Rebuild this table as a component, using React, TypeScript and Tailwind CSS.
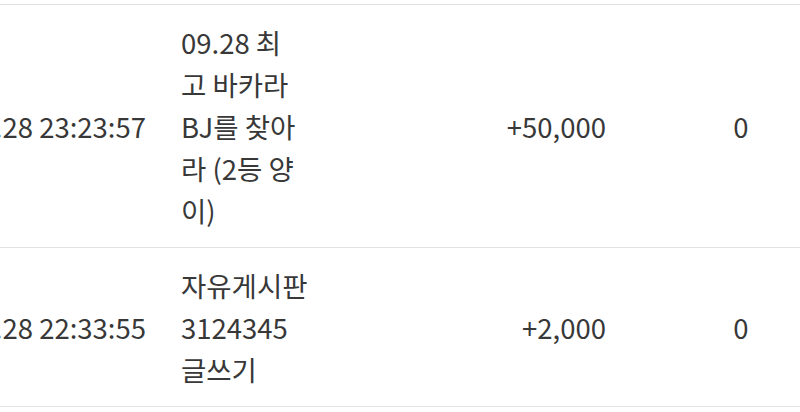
const rows = [
  {
    date: '2023.09.28 23:23:57',
    title: ['09.28 최', '고 바카라', 'BJ를 찾아', '라 (2등 양', '이)'],
    amount: '+50,000',
    balance: '0',
  },
  {
    date: '2023.09.28 22:33:55',
    title: ['자유게시판', '3124345', '글쓰기'],
    amount: '+2,000',
    balance: '0',
  },
];

export default function App() {
  return (
    <div
      className="w-[800px] h-[412px] overflow-hidden bg-white text-[#383838]"
      style={{ fontFamily: '"Noto Sans CJK KR", "Noto Sans", sans-serif' }}
    >
      <div className="h-[4px]" />
      {rows.map((row, i) => (
        <div
          key={i}
          className={`flex border-t border-[#e2e2e2] text-[27.5px] leading-[42px] ${
            i === rows.length - 1 ? 'border-b' : ''
          }`}
        >
          {/* date */}
          <div className="w-[165px] shrink-0 flex items-center justify-end pr-[19px] py-4 overflow-hidden">
            <span className="whitespace-nowrap">{row.date}</span>
          </div>
          {/* title */}
          <div className="w-[158px] shrink-0 px-4 py-4">
            {row.title.map((line) => (
              <div key={line} className="whitespace-nowrap">
                {line}
              </div>
            ))}
          </div>
          {/* amount */}
          <div className="w-[299px] shrink-0 flex items-center justify-end pr-4 py-4">
            {row.amount}
          </div>
          {/* balance */}
          <div className="w-[238px] shrink-0 flex items-center justify-center py-4">
            {row.balance}
          </div>
        </div>
      ))}
    </div>
  );
}
